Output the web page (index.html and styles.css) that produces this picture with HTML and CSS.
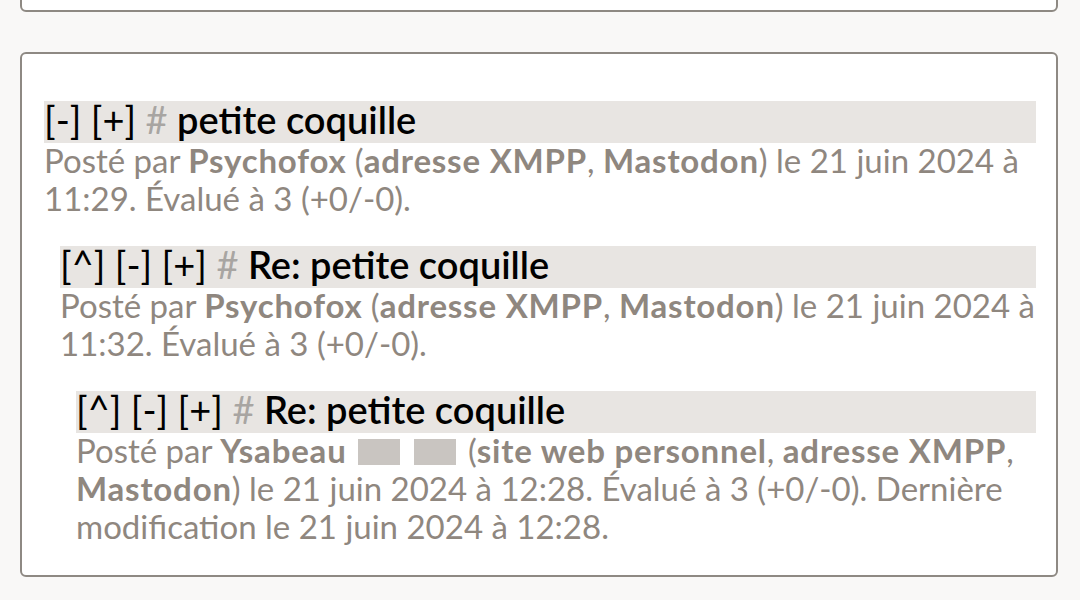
FILE: index.html
```html
<!DOCTYPE html>
<html lang="fr">
<head>
    <meta charset="UTF-8">
    <meta name="viewport" content="width=device-width, initial-scale=1.0">
    <title>Commentaires</title>
    <link rel="stylesheet" href="styles.css">
</head>
<body>

    <!-- Bloc précédent, coupé en haut de l'écran -->
    <div class="panel panel-previous"></div>

    <!-- Fil de commentaires -->
    <div class="panel">
        <ul class="threads">
            <li class="comment">
                <h2 class="comment-title">
                    <a href="#">[-]</a> <a href="#">[+]</a> <a class="anchor" href="#">#</a> petite coquille
                </h2>
                <p class="meta">
                    Posté par <a href="#">Psychofox</a> (<a href="#">adresse XMPP</a>, <a href="#">Mastodon</a>) le 21 juin 2024 à 11:29. Évalué à 3 (+0/-0).
                </p>

                <ul class="threads">
                    <li class="comment">
                        <h2 class="comment-title">
                            <a href="#">[^]</a> <a href="#">[-]</a> <a href="#">[+]</a> <a class="anchor" href="#">#</a> Re: petite coquille
                        </h2>
                        <p class="meta">
                            Posté par <a href="#">Psychofox</a> (<a href="#">adresse XMPP</a>, <a href="#">Mastodon</a>) le 21 juin 2024 à 11:32. Évalué à 3 (+0/-0).
                        </p>

                        <ul class="threads">
                            <li class="comment">
                                <h2 class="comment-title">
                                    <a href="#">[^]</a> <a href="#">[-]</a> <a href="#">[+]</a> <a class="anchor" href="#">#</a> Re: petite coquille
                                </h2>
                                <p class="meta">
                                    Posté par <a href="#">Ysabeau</a> <span class="badge"></span> <span class="badge"></span> (<a href="#">site web personnel</a>, <a href="#">adresse XMPP</a>, <a href="#">Mastodon</a>) le 21 juin 2024 à 12:28. Évalué à 3 (+0/-0). Dernière modification le 21 juin 2024 à 12:28.
                                </p>
                            </li>
                        </ul>
                    </li>
                </ul>
            </li>
        </ul>
    </div>

</body>
</html>
```

FILE: styles.css
```css
/* Style général */
body {
    font-family: Lato, "Open Sans", sans-serif;
    margin: 0;
    padding: 0 22px 0 20px;
    background-color: #f9f8f7;
    color: #8f877f;
}

.panel {
    background-color: #fff;
    border: 2px solid #8e8983;
    border-radius: 6px;
    padding: 27px 20px 28px 22px;
}

/* Bloc du dessus, seul le bas est visible */
.panel-previous {
    padding: 0;
    margin-top: -20px;
    margin-bottom: 40px;
    height: 32px;
    box-sizing: border-box;
}

.threads {
    list-style: none;
    margin: 0;
    padding: 0;
}

.threads .threads {
    padding-left: 16px;
}

.comment {
    margin: 20px 0 0;
}

.comment .comment {
    margin-top: 29px;
}

/* Titre du commentaire */
.comment-title {
    margin: 0;
    padding-bottom: 5px;
    background-color: #e8e5e2;
    color: #000;
    font-size: 38px;
    font-weight: 600;
    line-height: 37px;
}

.comment-title a {
    color: #000;
    font-weight: 400;
    text-decoration: none;
}

.comment-title a.anchor {
    color: #a8a5a2;
}

/* Ligne d'informations */
.meta {
    margin: -2px 0 2px;
    font-size: 33px;
    line-height: 38px;
}

.meta a {
    color: #8f877f;
    font-weight: 700;
    letter-spacing: 0.8px;
    text-decoration: none;
}

.badge {
    display: inline-block;
    width: 42px;
    height: 26px;
    margin: 0 3px;
    vertical-align: -2px;
    background-color: #c9c5c1;
}
```
